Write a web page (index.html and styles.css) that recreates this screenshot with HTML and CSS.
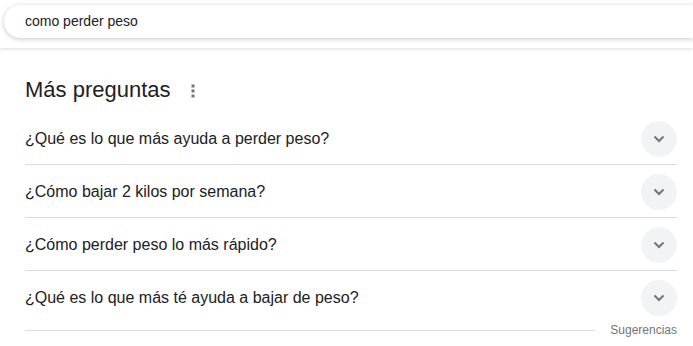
FILE: index.html
```html
<!DOCTYPE html>
<html lang="es">
<head>
  <meta charset="UTF-8">
  <title>como perder peso</title>
  <link rel="stylesheet" href="styles.css">
</head>
<body>
<div class="header">
  <div class="search-box">como perder peso</div>
</div>

<div class="results">
  <div class="title-row">
    <h2>Más preguntas</h2>
    <span class="dots">
      <svg width="4" height="14" viewBox="0 0 4 14"><rect x="0.5" y="0.5" width="3" height="3" fill="#70757a"/><rect x="0.5" y="5.5" width="3" height="3" fill="#70757a"/><rect x="0.5" y="10.5" width="3" height="3" fill="#70757a"/></svg>
    </span>
  </div>

  <div class="question">
    <span>¿Qué es lo que más ayuda a perder peso?</span>
    <span class="chevron"><svg width="12" height="8" viewBox="0 0 12 8"><path d="M1.5 1.5 L6 6 L10.5 1.5" fill="none" stroke="#70757a" stroke-width="2"/></svg></span>
  </div>
  <div class="question">
    <span>¿Cómo bajar 2 kilos por semana?</span>
    <span class="chevron"><svg width="12" height="8" viewBox="0 0 12 8"><path d="M1.5 1.5 L6 6 L10.5 1.5" fill="none" stroke="#70757a" stroke-width="2"/></svg></span>
  </div>
  <div class="question">
    <span>¿Cómo perder peso lo más rápido?</span>
    <span class="chevron"><svg width="12" height="8" viewBox="0 0 12 8"><path d="M1.5 1.5 L6 6 L10.5 1.5" fill="none" stroke="#70757a" stroke-width="2"/></svg></span>
  </div>
  <div class="question last">
    <span>¿Qué es lo que más té ayuda a bajar de peso?</span>
    <span class="chevron"><svg width="12" height="8" viewBox="0 0 12 8"><path d="M1.5 1.5 L6 6 L10.5 1.5" fill="none" stroke="#70757a" stroke-width="2"/></svg></span>
  </div>

  <div class="footer">
    <div class="footer-line"></div>
    <span class="footer-text">Sugerencias</span>
  </div>
</div>
</body>
</html>
```

FILE: styles.css
```css
body {
  font-family: 'Liberation Sans', Arial, sans-serif;
  background: #fff;
  color: #202124;
  margin: 0;
  overflow: hidden;
}
.header {
  height: 48px;
  padding: 5px 0 0 4px;
  box-sizing: border-box;
  background: #fff;
  box-shadow: 0 1px 4px rgba(32, 33, 36, 0.16);
}
.search-box {
  height: 33px;
  line-height: 33px;
  padding-left: 21px;
  box-sizing: border-box;
  border-radius: 17px 0 0 17px;
  font-size: 14px;
  color: #202124;
  background: #fff;
  box-shadow: 0 1px 5px rgba(32, 33, 36, 0.26);
}
.results {
  padding: 20px 16px 0 25px;
}
.title-row {
  display: flex;
  align-items: center;
  height: 44px;
}
.title-row h2 {
  margin: 0;
  font-size: 22px;
  font-weight: normal;
  color: #202124;
}
.dots {
  display: flex;
  margin-left: 20px;
  margin-top: 1px;
}
.question {
  display: flex;
  align-items: center;
  justify-content: space-between;
  height: 53px;
  box-sizing: border-box;
  border-bottom: 1px solid #dadce0;
  font-size: 16px;
  color: #202124;
  padding-top: 1px;
}
.question.last {
  border-bottom: none;
}
.chevron {
  width: 36px;
  height: 36px;
  border-radius: 50%;
  background: #f1f3f4;
  display: flex;
  align-items: center;
  justify-content: center;
}
.footer {
  display: flex;
  align-items: center;
  margin-top: -1px;
}
.footer-line {
  flex: 1;
  height: 1px;
  background: #dadce0;
}
.footer-text {
  margin-left: 15px;
  font-size: 12px;
  color: #70757a;
}
```
